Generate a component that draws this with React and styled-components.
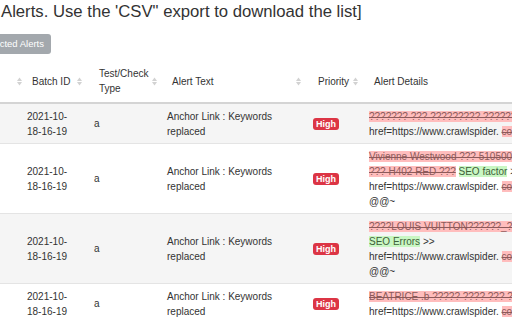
import React from 'react'
import styled, { createGlobalStyle } from 'styled-components'

const GlobalStyle = createGlobalStyle`
    html, body {
        margin: 0;
        padding: 0;
        overflow: hidden;
        background: #fff;
        font-family: "Liberation Sans", Arial, sans-serif;
        color: #333;
    }
`;

const Page = styled.div`
    display: flex;
    flex-direction: column;
    width: 900px;
`;

const Title = styled.h3`
    margin: 0 0 0 1px;
    font-size: 16.7px;
    font-weight: normal;
    line-height: 24px;
    color: #333;
    white-space: nowrap;
`;

const ButtonBar = styled.div`
    display: flex;
    justify-content: flex-end;
    width: 51px;
    overflow: hidden;
    margin-top: 10px;
`;

const Button = styled.button`
    flex-shrink: 0;
    border: 0;
    border-radius: 3px;
    background: #a3a8ad;
    color: #fff;
    font-family: inherit;
    font-size: 9.5px;
    line-height: 12px;
    padding: 4px 7px;
    white-space: nowrap;
`;

const Table = styled.table`
    margin-top: 6px;
    border-collapse: collapse;
    table-layout: fixed;
    width: 861px;
    font-size: 10px;
    line-height: 15px;
`;

const Th = styled.th`
    padding: 6px 4px 6px 13px;
    border-bottom: 2px solid #d4d4d4;
    font-weight: normal;
    text-align: left;
    color: #333;
    vertical-align: middle;
`;

const HeadInner = styled.div`
    display: flex;
    align-items: center;
    justify-content: space-between;
    gap: 4px;
`;

const Row = styled.tr`
    background: ${p => (p.$striped ? '#f5f5f5' : '#fff')};
`;

const Td = styled.td`
    padding: 4.5px 8px;
    border-bottom: 1px solid #e4e4e4;
    vertical-align: middle;
    color: #333;
    overflow: hidden;
`;

const Badge = styled.span`
    display: inline-block;
    background: #dc3545;
    color: #fff;
    font-weight: bold;
    font-size: 9px;
    line-height: 10px;
    padding: 1px 3px;
    border-radius: 3px;
`;

const Line = styled.div`
    white-space: nowrap;
`;

const Del = styled.span`
    background: #ffbdbd;
    color: #8c5a5a;
    text-decoration: line-through;
`;

const Ins = styled.span`
    background: #c9f7c3;
    color: #3f5f3a;
`;

function SortIcon() {
    return (
        <svg width="5" height="9" viewBox="0 0 5 9" style={{ flexShrink: 0 }}>
            <polygon points="0,4 2.5,0.5 5,4" fill="#d2d2d2" />
            <polygon points="0,5 2.5,8.5 5,5" fill="#d2d2d2" />
        </svg>
    )
}

const rows = [
    {
        lines: [
            [<Del key="d">??????? ??? ????????? ??????? ??? ???????? ????? ??????? ????</Del>],
            ['href=https://www.crawlspider. ', <Del key="d">com/??????????????????</Del>],
        ],
    },
    {
        lines: [
            [<Del key="d">Vivienne Westwood ??? 5105002 ??? ???? ????????</Del>],
            [<Del key="d">??? H402 RED ???</Del>, ' ', <Ins key="i">SEO factor</Ins>, ' >> <a href='],
            ['href=https://www.crawlspider. ', <Del key="d">com/??????????????????</Del>],
            ['@@~'],
        ],
    },
    {
        lines: [
            [<Del key="d">????LOUIS VUITTON??????_?????? ?????? ????</Del>],
            [<Ins key="i">SEO Errors</Ins>, ' >>'],
            ['href=https://www.crawlspider. ', <Del key="d">com/??????????????????</Del>],
            ['@@~'],
        ],
    },
    {
        lines: [
            [<Del key="d">BEATRICE .b ????? ???? ??? ???????? ??????</Del>],
            ['href=https://www.crawlspider. ', <Del key="d">com/??????????????????</Del>],
        ],
    },
];

export default function App() {
    return (
        <Page>
            <GlobalStyle />
            <Title>Alerts. Use the 'CSV" export to download the list]</Title>

            <ButtonBar>
                <Button>Delete Selected Alerts</Button>
            </ButtonBar>

            <Table>
                <colgroup>
                    <col style={{ width: 19 }} />
                    <col style={{ width: 67 }} />
                    <col style={{ width: 73 }} />
                    <col style={{ width: 146 }} />
                    <col style={{ width: 56 }} />
                    <col style={{ width: 500 }} />
                </colgroup>
                <thead>
                    <tr>
                        <Th><HeadInner><span /><SortIcon /></HeadInner></Th>
                        <Th><HeadInner><span>Batch ID</span><SortIcon /></HeadInner></Th>
                        <Th><HeadInner><span>Test/Check Type</span><SortIcon /></HeadInner></Th>
                        <Th><HeadInner><span>Alert Text</span><SortIcon /></HeadInner></Th>
                        <Th><HeadInner><span>Priority</span><SortIcon /></HeadInner></Th>
                        <Th><HeadInner><span>Alert Details</span></HeadInner></Th>
                    </tr>
                </thead>
                <tbody>
                    {rows.map((row, i) => (
                        <Row key={i} $striped={i % 2 === 0}>
                            <Td />
                            <Td>2021-10-<wbr />18-16-19</Td>
                            <Td>a</Td>
                            <Td>Anchor Link : Keywords replaced</Td>
                            <Td><Badge>High</Badge></Td>
                            <Td>
                                {row.lines.map((parts, j) => (
                                    <Line key={j}>{parts}</Line>
                                ))}
                            </Td>
                        </Row>
                    ))}
                </tbody>
            </Table>
        </Page>
    )
}
